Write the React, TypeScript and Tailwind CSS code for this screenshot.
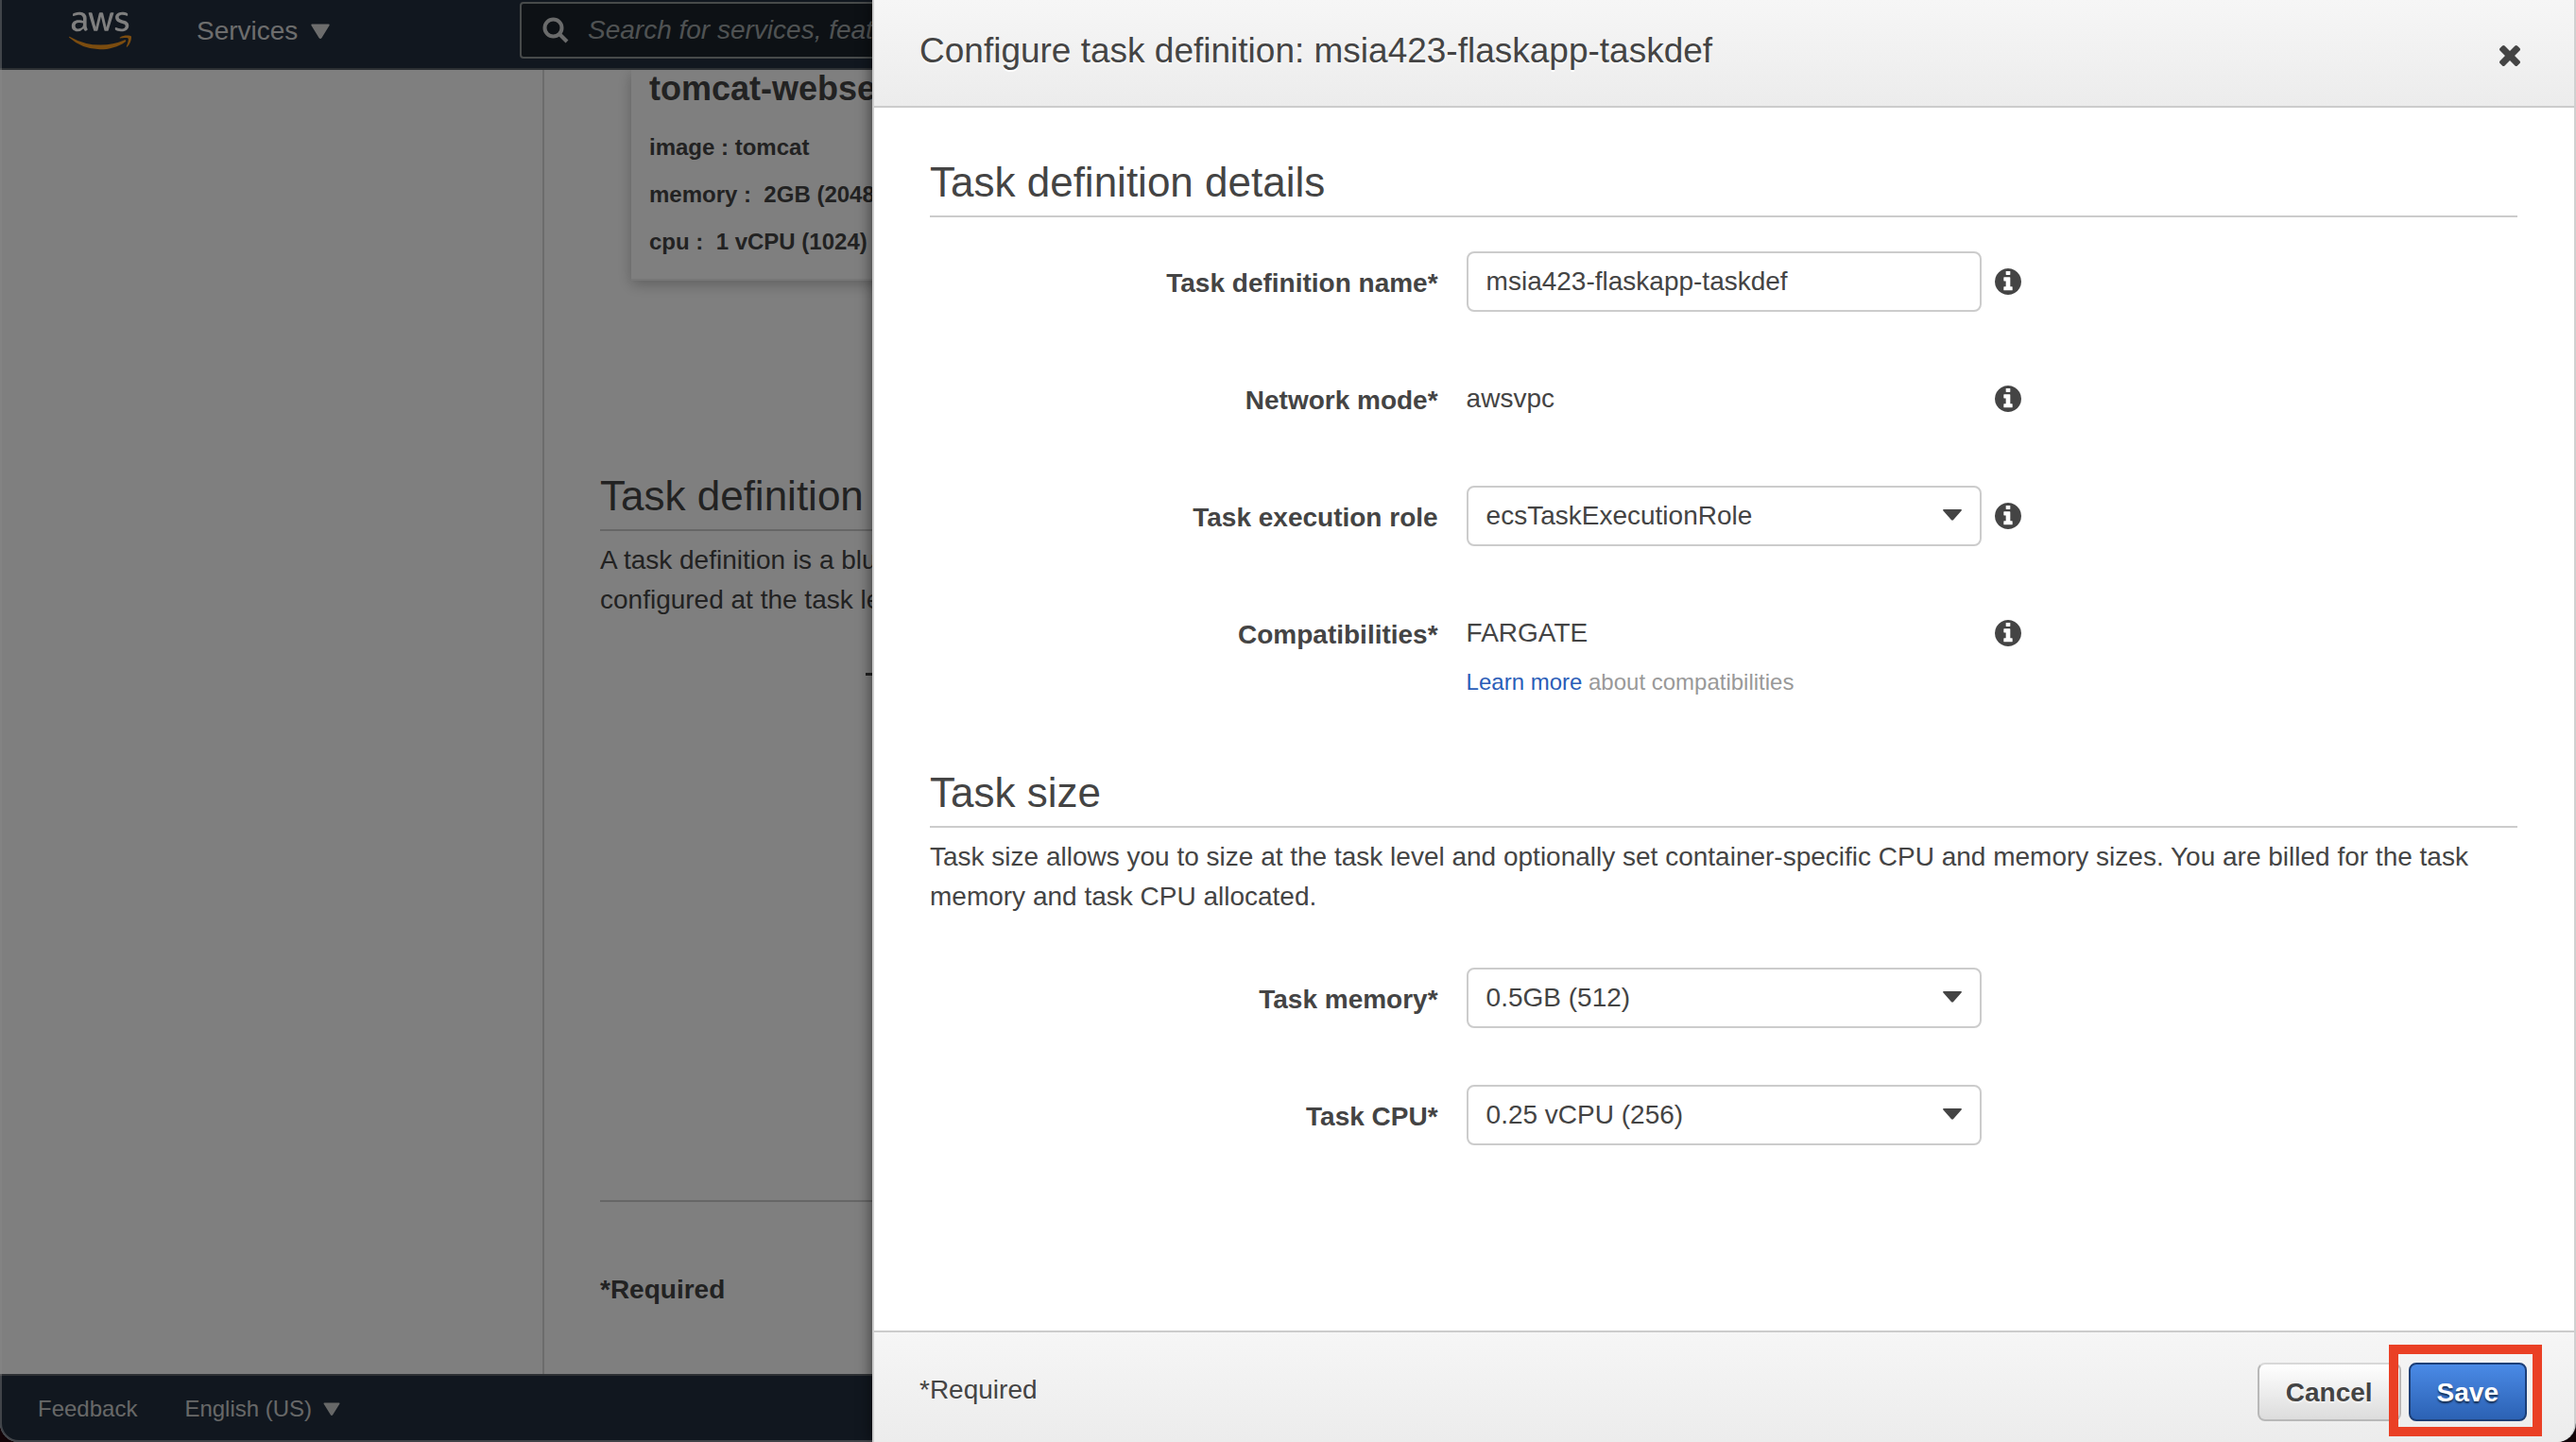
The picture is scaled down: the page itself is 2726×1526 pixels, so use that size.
import type { ReactNode } from "react";
import { FaAws } from "react-icons/fa";

function InfoIcon() {
  return (
    <svg viewBox="0 0 1536 1536" className="size-7 fill-[#444]" aria-hidden="true">
      <path d="M1024 1248v-160q0-14-9-23t-23-9h-96v-512q0-14-9-23t-23-9h-320q-14 0-23 9t-9 23v160q0 14 9 23t23 9h96v320h-96q-14 0-23 9t-9 23v160q0 14 9 23t23 9h448q14 0 23-9t9-23zM896 352v-160q0-14-9-23t-23-9h-192q-14 0-23 9t-9 23v160q0 14 9 23t23 9h192q14 0 23-9t9-23zM1536 768q0 209-103 385.500t-279.500 279.500-385.500 103-385.500-103-279.500-279.500-103-385.500 103-385.500 279.500-279.500 385.500-103 385.500 103 279.500 279.500 103 385.500z" />
    </svg>
  );
}

function CloseIcon() {
  return (
    <svg viewBox="110 366 1188 1188" className="size-[22px] fill-[#444]" aria-hidden="true">
      <path d="M1298 1322q0 40-28 68l-136 136q-28 28-68 28t-68-28l-294-294-294 294q-28 28-68 28t-68-28l-136-136q-28-28-28-68t28-68l294-294-294-294q-28-28-28-68t28-68l136-136q28-28 68-28t68 28l294 294 294-294q28-28 68-28t68 28l136 136q28 28 28 68t-28 68l-294 294 294 294q28 28 28 68z" />
    </svg>
  );
}

function SearchIcon() {
  return (
    <svg viewBox="0 0 28 28" className="size-7 shrink-0 fill-none stroke-[#d5d6d6]" strokeWidth="4" aria-hidden="true">
      <circle cx="11.500" cy="11.500" r="9" />
      <path d="M18 18 L26 26" />
    </svg>
  );
}

function NavCaret({ className }: { className: string }) {
  return (
    <svg viewBox="0 0 20 16" className={className} aria-hidden="true">
      <path d="M1.200 0.500h17.600q1.400 0 0.700 1.400l-8 13q-1.500 2-3 0l-8-13q-0.700-1.400 0.700-1.400z" />
    </svg>
  );
}

function AwsLogo() {
  return (
    <>
      <svg className="absolute size-0" aria-hidden="true">
        <defs>
          <linearGradient id="awsFill" gradientUnits="userSpaceOnUse" x1="0" y1="0" x2="0" y2="512">
            <stop offset="0.540" stopColor="#fff" />
            <stop offset="0.540" stopColor="#f7981f" />
          </linearGradient>
        </defs>
      </svg>
      <FaAws fill="url(#awsFill)" className="h-[53px] w-[66px]" />
    </>
  );
}

function SectionTitle({ children }: { children: ReactNode }) {
  return (
    <h2 className="border-b-2 border-[#ccc] pb-[9px] text-[44px] leading-[52px] whitespace-nowrap">{children}</h2>
  );
}

function Row({ label, htmlFor, info, children }: { label: string; htmlFor?: string; info?: boolean; children: ReactNode }) {
  const labelClass = "pt-1 text-right font-bold";
  return (
    <div className="grid min-h-16 grid-cols-[32%_minmax(0,545px)_auto] items-center">
      {htmlFor ? (
        <label htmlFor={htmlFor} className={labelClass}>{label}</label>
      ) : (
        <span className={labelClass}>{label}</span>
      )}
      <div className="ml-[30px] -mr-[30px]">{children}</div>
      {info && (
        <button type="button" aria-label={`About ${label}`} className="ml-[44px] justify-self-start">
          <InfoIcon />
        </button>
      )}
    </div>
  );
}

function Select({ id, value }: { id: string; value: string }) {
  return (
    <div className="relative">
      <select id={id} defaultValue={value} className="block h-16 w-full appearance-none rounded-lg border-2 border-[#ccc] bg-white px-[19px]">
        <option>{value}</option>
      </select>
      <svg viewBox="0 0 20 12" className="pointer-events-none absolute top-[25px] right-[21px] h-3 w-5 fill-[#444]" aria-hidden="true">
        <path d="M1 0h18q1.500 0.300 0.600 1.600l-8.600 9.600q-1 0.900-2 0l-8.600-9.600q-0.900-1.300 0.600-1.600z" />
      </svg>
    </div>
  );
}

function ConsolePage() {
  return (
    <div className="flex h-full flex-col bg-white">
      <nav className="flex h-[74px] shrink-0 items-start border-b-2 border-[#5b6067] bg-[#232f3e] pl-[73px] text-[#dadbdb]">
        <div className="w-[135px] pt-1.5">
          <AwsLogo />
        </div>
        <button type="button" className="flex w-[342px] items-center gap-[14px] pt-3 leading-[42px]">
          Services
          <NavCaret className="h-4 w-5 fill-current" />
        </button>
        <div className="mt-0.5 flex h-[60px] flex-1 items-center gap-5 rounded border-2 border-[#8f9495] bg-[#1a222a] pl-[22px]">
          <SearchIcon />
          <input
            type="search"
            aria-label="Search"
            placeholder="Search for services, features, marketplace products, and docs"
            className="min-w-0 flex-1 bg-transparent italic placeholder:text-[#9fa5a6]"
          />
        </div>
      </nav>

      <div className="flex min-h-0 flex-1 overflow-hidden">
        <div className="w-[576px] shrink-0 border-r-2 border-[#d9d9d9]" />
        <main className="flex min-w-0 flex-1 flex-col pr-[60px] pb-[68px] pl-[59px]">
          <section className="ml-[33px] w-[560px] border-b-2 border-[#eee] pr-5 pb-[14px] pl-[19px] text-2xl leading-[50px] font-bold shadow-[0_4px_14px_rgba(0,0,0,0.25)]">
            <h3 className="mb-[17px] text-4xl leading-10">tomcat-webserver</h3>
            <p>image : tomcat</p>
            <p>memory :&nbsp; 2GB (2048)</p>
            <p>cpu :&nbsp; 1 vCPU (1024)</p>
          </section>
          <section className="mt-[202px]">
            <SectionTitle>Task definition</SectionTitle>
            <p className="mt-2.5 whitespace-nowrap">
              A task definition is a blueprint
              <br />
              configured at the task level
            </p>
            <div className="mt-14 ml-[281px] h-[3px] bg-[#444]" />
          </section>
          <div className="mt-auto border-t-2 border-[#ccc] pt-[72px] font-bold">*Required</div>
        </main>
      </div>

      <footer className="flex h-[72px] shrink-0 items-center gap-[50px] border-t-2 border-[#5b6067] bg-[#232f3e] pl-10 text-2xl text-[#cfd0d0]">
        <a href="#feedback">Feedback</a>
        <button type="button" className="flex items-center gap-3">
          English (US)
          <NavCaret className="h-[14px] w-[18px] fill-current" />
        </button>
      </footer>
    </div>
  );
}

function TaskDefinitionDrawer() {
  return (
    <div
      role="dialog"
      aria-labelledby="drawer-title"
      className="absolute inset-y-0 right-0 left-[923px] flex flex-col overflow-hidden rounded-br-[20px] border-x-2 border-r-[#d0d0d0] border-l-[#ccc] bg-white shadow-[0_0_16px_rgba(0,0,0,0.6)]"
    >
      <header className="flex h-[114px] shrink-0 items-start justify-between border-b-2 border-[#ccc] bg-linear-to-b from-[#f6f6f6] to-[#ececec] pt-[26px] pr-[50px] pl-12">
        <h1 id="drawer-title" className="text-[37px] leading-14 text-shadow-[0_2px_0_#fff]">
          Configure task definition: msia423-flaskapp-taskdef
        </h1>
        <button type="button" aria-label="Close" className="mt-[15px] p-[7px]">
          <CloseIcon />
        </button>
      </header>

      <form className="min-h-0 flex-1 overflow-hidden pt-[53px] pr-[60px] pl-[59px]">
        <SectionTitle>Task definition details</SectionTitle>
        <div className="mt-9 flex flex-col gap-[60px]">
          <Row label="Task definition name*" htmlFor="task-name" info>
            <input
              id="task-name"
              type="text"
              defaultValue="msia423-flaskapp-taskdef"
              className="block h-16 w-full rounded-lg border-2 border-[#ccc] bg-white px-[19px]"
            />
          </Row>
          <Row label="Network mode*" info>awsvpc</Row>
          <Row label="Task execution role" htmlFor="execution-role" info>
            <Select id="execution-role" value="ecsTaskExecutionRole" />
          </Row>
          <Row label="Compatibilities*" info>FARGATE</Row>
        </div>
        <p className="mt-0.5 ml-[calc(32%+30px)] text-2xl leading-9 text-[#999]">
          <a href="#compatibilities" className="text-[#2a5db8]">Learn more</a> about compatibilities
        </p>

        <div className="mt-[73px]">
          <SectionTitle>Task size</SectionTitle>
        </div>
        <p className="mt-2.5">
          Task size allows you to size at the task level and optionally set container-specific CPU and memory sizes. You are billed for the task memory and task CPU allocated.
        </p>
        <div className="mt-[54px] flex flex-col gap-[60px]">
          <Row label="Task memory*" htmlFor="task-memory">
            <Select id="task-memory" value="0.5GB (512)" />
          </Row>
          <Row label="Task CPU*" htmlFor="task-cpu">
            <Select id="task-cpu" value="0.25 vCPU (256)" />
          </Row>
        </div>
      </form>

      <footer className="flex h-[118px] shrink-0 items-start justify-between border-t-2 border-[#ccc] bg-linear-to-b from-[#f6f6f6] to-[#ececec] pt-8 pr-[50px] pl-12">
        <span className="leading-[58px]">*Required</span>
        <div className="flex gap-2">
          <button
            type="button"
            className="h-[62px] rounded-lg border-2 border-[#b8b8b8] border-t-[#d8d8d8] bg-linear-to-b from-white to-[#dcdcdc] px-7 pt-0.5 font-bold text-shadow-[0_1px_3px_#fff]"
          >
            Cancel
          </button>
          <div className="relative">
            <button
              type="submit"
              className="h-[62px] rounded-lg border-2 border-[#1c3f78] bg-linear-to-b from-[#4a8ae6] to-[#2c62b4] px-7 pt-0.5 font-bold text-white text-shadow-[0_2px_2px_rgba(0,0,0,0.6)]"
            >
              Save
            </button>
            <div className="pointer-events-none absolute -top-[19px] -right-4 -bottom-4 -left-[21px] border-[10px] border-[#ea4025]" />
          </div>
        </div>
      </footer>
    </div>
  );
}

export default function App() {
  return (
    <div className="h-screen bg-[#120408] font-['Liberation_Sans',Arial,sans-serif] text-[28px] leading-[42px] text-[#444]">
      <div className="relative h-full overflow-hidden rounded-b-[20px]">
        <ConsolePage />
        <div className="absolute inset-0 bg-black/50" />
        <div className="pointer-events-none absolute inset-0 rounded-bl-[20px] border-b-2 border-l-2 border-[#8a8a8a]/40" />
        <TaskDefinitionDrawer />
      </div>
    </div>
  );
}
